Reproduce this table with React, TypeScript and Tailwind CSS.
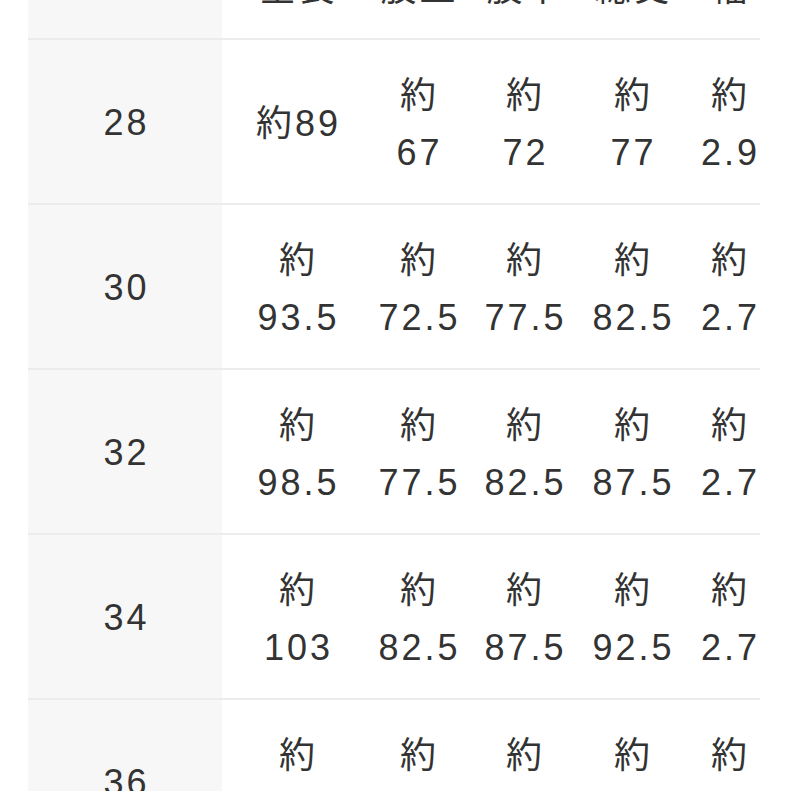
const rows: { size: string; cells: string[][] }[] = [
  { size: "28", cells: [["約89"], ["約", "67"], ["約", "72"], ["約", "77"], ["約", "2.9"]] },
  { size: "30", cells: [["約", "93.5"], ["約", "72.5"], ["約", "77.5"], ["約", "82.5"], ["約", "2.7"]] },
  { size: "32", cells: [["約", "98.5"], ["約", "77.5"], ["約", "82.5"], ["約", "87.5"], ["約", "2.7"]] },
  { size: "34", cells: [["約", "103"], ["約", "82.5"], ["約", "87.5"], ["約", "92.5"], ["約", "2.7"]] },
  { size: "36", cells: [["約", "108"], ["約", "87.5"], ["約", "92.5"], ["約", "97.5"], ["約", "2.7"]] },
];

const headers = ["全長", "股上", "股下", "総丈", "幅"];

// column widths of the value cells, left to right
const colW = ["w-[150px]", "w-[92px]", "w-[120px]", "w-[96px]", "w-[98px]"];

export default function App() {
  return (
    <div
      className="h-[791px] w-[791px] overflow-hidden bg-white text-[#333] text-[36px] tracking-[3px]"
      style={{ fontFamily: '"Liberation Sans", "Noto Sans CJK JP", sans-serif' }}
    >
      <div className="ml-[28px] w-[732px]">
        {/* header row, mostly scrolled out of view */}
        <div className="flex h-[40px] border-b-2 border-[#ececec]">
          <div className="w-[194px] shrink-0 bg-[#f7f7f7]" />
          {headers.map((h, i) => (
            <div key={i} className={`${colW[i]} shrink-0 -mt-[28px] pl-[3px] text-center leading-[34px]`}>
              {h}
            </div>
          ))}
        </div>

        {rows.map((r) => (
          <div key={r.size} className="flex h-[165px] border-b-2 border-[#ececec]">
            <div className="flex w-[194px] shrink-0 items-center justify-center bg-[#f7f7f7] pl-[3px] pt-[2px]">
              {r.size}
            </div>
            {r.cells.map((lines, i) => (
              <div
                key={i}
                className={`${colW[i]} shrink-0 flex flex-col items-center justify-center pl-[3px] pt-[4px] leading-[57px]`}
              >
                {lines.map((l, j) => (
                  <span key={j} className="whitespace-nowrap">
                    {l}
                  </span>
                ))}
              </div>
            ))}
          </div>
        ))}
      </div>
    </div>
  );
}
